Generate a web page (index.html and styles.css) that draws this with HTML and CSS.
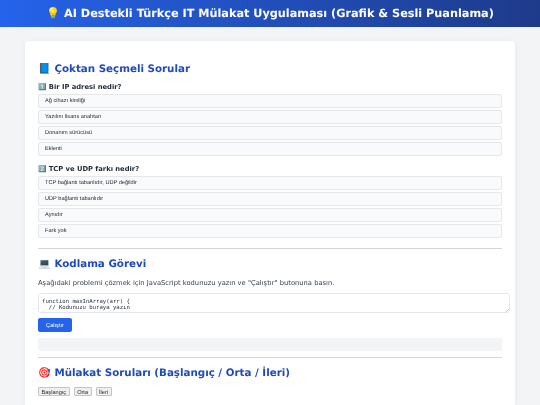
FILE: index.html
```html
<!DOCTYPE html>
<html lang="tr">
<head>
    <meta charset="UTF-8">
    <title>AI Destekli Türkçe IT Mülakat Uygulaması</title>
    <link rel="stylesheet" href="styles.css">
</head>
<body>
<header class="top-bar">💡 AI Destekli Türkçe IT Mülakat Uygulaması (Grafik &amp; Sesli Puanlama)</header>
<main class="card">
    <h2 class="first">📘 Çoktan Seçmeli Sorular</h2>

    <p class="question">1️⃣ Bir IP adresi nedir?</p>
    <div class="option">Ağ cihazı kimliği</div>
    <div class="option">Yazılım lisans anahtarı</div>
    <div class="option">Donanım sürücüsü</div>
    <div class="option">Eklenti</div>

    <p class="question second">2️⃣ TCP ve UDP farkı nedir?</p>
    <div class="option">TCP bağlantı tabanlıdır, UDP değildir</div>
    <div class="option">UDP bağlantı tabanlıdır</div>
    <div class="option">Aynıdır</div>
    <div class="option">Fark yok</div>

    <hr>

    <h2>💻 Kodlama Görevi</h2>
    <p class="intro">Aşağıdaki problemi çözmek için JavaScript kodunuzu yazın ve "Çalıştır" butonuna basın.</p>
    <textarea class="code" spellcheck="false">function maxInArray(arr) {
  // Kodunuzu buraya yazın
}</textarea>
    <button class="run" type="button">Çalıştır</button>
    <div class="output"></div>

    <hr>

    <h2>🎯 Mülakat Soruları (Başlangıç / Orta / İleri)</h2>
    <div class="levels">
        <button type="button">Başlangıç</button>
        <button type="button">Orta</button>
        <button type="button">İleri</button>
    </div>
</main>
</body>
</html>
```

FILE: styles.css
```css
* {
    padding: 0;
    margin: 0;
    box-sizing: border-box;
}
body {
    font-family: "DejaVu Sans", sans-serif;
    background-color: #f3f4f6;
    color: #1f2937;
    text-rendering: geometricPrecision;
}
.top-bar {
    height: 27px;
    line-height: 27px;
    text-align: center;
    font-size: 11.25px;
    font-weight: bold;
    color: white;
    background-image: linear-gradient(90deg, #2563eb, #1e3a8a);
}
.card {
    width: 490px;
    height: 364px;
    margin: 14px auto 0;
    padding: 13px;
    background-color: white;
    border-radius: 4px 4px 0 0;
    box-shadow: 0 1px 5px rgba(0, 0, 0, 0.06);
}
h2 {
    font-size: 10.3px;
    line-height: 14px;
    color: #1e4bb8;
}
h2.first {
    margin-top: 8px;
}
.question {
    font-size: 6.75px;
    line-height: 9px;
    font-weight: bold;
    margin-top: 7px;
    margin-bottom: 2px;
}
.question.second {
    margin-top: 9px;
}
.option {
    height: 14px;
    line-height: 13.5px;
    margin-bottom: 2px;
    padding-left: 6px;
    font-family: "Liberation Sans", sans-serif;
    font-size: 5.625px;
    background-color: #f9fafb;
    border: 1px solid #e5e7eb;
    border-radius: 2px;
}
hr {
    border: none;
    border-top: 1px solid #d1d5db;
    margin: 10px 0 8px;
}
.intro {
    font-size: 6.75px;
    line-height: 9px;
    margin-top: 7.5px;
    color: #374151;
}
.code {
    display: block;
    width: 472px;
    height: 20px;
    margin-top: 5.5px;
    padding: 3.5px 3px 0;
    font-family: "DejaVu Sans Mono", monospace;
    font-size: 5.625px;
    line-height: 6.5px;
    color: #1f2937;
    border: 1px solid #e5e7eb;
    border-radius: 3px;
}
.code::-webkit-resizer {
    background: linear-gradient(135deg, transparent 55%, #c4c4c4 55%, #c4c4c4 75%, transparent 75%) right bottom / 4px 4px no-repeat;
}
.run {
    display: block;
    width: 34px;
    height: 14px;
    margin-top: 5px;
    font-family: "Liberation Sans", sans-serif;
    font-size: 5.625px;
    color: white;
    background-color: #2563eb;
    border: none;
    border-radius: 2px;
}
.output {
    height: 13px;
    margin-top: 6px;
    background-color: #f3f4f6;
    border-radius: 2px;
}
.output + hr {
    margin: 6px 0 7.9px;
}
.levels {
    display: flex;
    gap: 4px;
    margin-top: 7.1px;
}
.levels button {
    height: 9.5px;
    padding: 0 2.5px;
    font-family: "Liberation Sans", sans-serif;
    font-size: 5.625px;
    color: #1f2937;
    background-color: #efefef;
    border: 1px solid #c4c4c4;
    border-radius: 1px;
}
```
